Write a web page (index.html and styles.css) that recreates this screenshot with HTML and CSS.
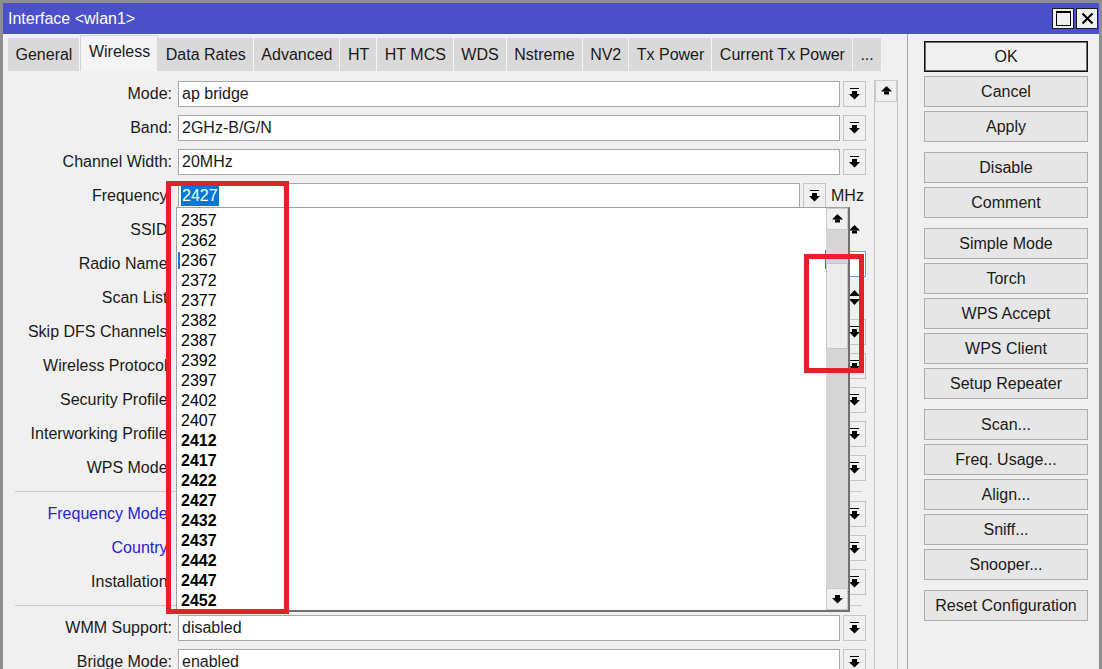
FILE: index.html
```html
<!DOCTYPE html>
<html lang="en">
<head>
<meta charset="UTF-8">
<title>Interface &lt;wlan1&gt;</title>
<link rel="stylesheet" href="styles.css">
</head>
<body>

<svg class="defs" xmlns="http://www.w3.org/2000/svg">
    <symbol id="ic-dd" viewBox="0 0 11 12">
        <rect x="1" y="0" width="9" height="1"/>
        <rect x="3" y="3" width="5" height="3"/>
        <polygon points="0,6 11,6 5.5,11.5"/>
    </symbol>
    <symbol id="ic-up" viewBox="0 0 11 12">
        <polygon points="0,6.5 11,6.5 5.5,1"/>
        <rect x="3" y="6.5" width="5" height="3"/>
    </symbol>
    <symbol id="ic-down" viewBox="0 0 11 12">
        <rect x="3" y="2" width="5" height="3"/>
        <polygon points="0,5 11,5 5.5,10.5"/>
    </symbol>
    <symbol id="ic-updown" viewBox="0 0 11 18">
        <polygon points="0,7 11,7 5.5,1"/>
        <polygon points="0,10 11,10 5.5,16"/>
    </symbol>
</svg>

<div class="window">
    <div class="titlebar">
        <span class="title">Interface &lt;wlan1&gt;</span>
        <div class="title-btns">
            <span class="tb-btn"><span class="max-box"></span></span>
            <span class="tb-btn">
                <svg width="13" height="13" viewBox="0 0 13 13"><path d="M1.5 1.5 L11.5 11.5 M11.5 1.5 L1.5 11.5" stroke="#000" stroke-width="2"/></svg>
            </span>
        </div>
    </div>

    <div class="body">
        <div class="main">
            <div class="tabs">
                <span class="tab">General</span>
                <span class="tab active">Wireless</span>
                <span class="tab">Data Rates</span>
                <span class="tab">Advanced</span>
                <span class="tab">HT</span>
                <span class="tab">HT MCS</span>
                <span class="tab">WDS</span>
                <span class="tab">Nstreme</span>
                <span class="tab">NV2</span>
                <span class="tab">Tx Power</span>
                <span class="tab">Current Tx Power</span>
                <span class="tab">...</span>
            </div>

            <div class="panel">
                <div class="form">
                    <div class="row">
                        <span class="lbl">Mode:</span>
                        <div class="field">ap bridge</div>
                        <span class="dd-btn"><svg class="ic"><use href="#ic-dd"/></svg></span>
                    </div>
                    <div class="row">
                        <span class="lbl">Band:</span>
                        <div class="field">2GHz-B/G/N</div>
                        <span class="dd-btn"><svg class="ic"><use href="#ic-dd"/></svg></span>
                    </div>
                    <div class="row">
                        <span class="lbl">Channel Width:</span>
                        <div class="field">20MHz</div>
                        <span class="dd-btn"><svg class="ic"><use href="#ic-dd"/></svg></span>
                    </div>
                    <div class="row">
                        <span class="lbl">Frequency:</span>
                        <div class="field"><span class="sel">2427</span></div>
                        <span class="dd-btn"><svg class="ic"><use href="#ic-dd"/></svg></span>
                        <span class="unit">MHz</span>
                    </div>
                    <div class="row">
                        <span class="lbl">SSID:</span>
                        <div class="field"></div>
                        <span class="ico-btn"><svg class="ic"><use href="#ic-up"/></svg></span>
                    </div>
                    <div class="row">
                        <span class="lbl">Radio Name:</span>
                        <div class="field full focus"></div>
                    </div>
                    <div class="row">
                        <span class="lbl">Scan List:</span>
                        <div class="field"></div>
                        <span class="ico-btn"><svg class="ic-tall"><use href="#ic-updown"/></svg></span>
                    </div>
                    <div class="row">
                        <span class="lbl">Skip DFS Channels:</span>
                        <div class="field"></div>
                        <span class="dd-btn"><svg class="ic"><use href="#ic-dd"/></svg></span>
                    </div>
                    <div class="row">
                        <span class="lbl">Wireless Protocol:</span>
                        <div class="field"></div>
                        <span class="dd-btn"><svg class="ic"><use href="#ic-dd"/></svg></span>
                    </div>
                    <div class="row">
                        <span class="lbl">Security Profile:</span>
                        <div class="field"></div>
                        <span class="dd-btn"><svg class="ic"><use href="#ic-dd"/></svg></span>
                    </div>
                    <div class="row">
                        <span class="lbl">Interworking Profile:</span>
                        <div class="field"></div>
                        <span class="dd-btn"><svg class="ic"><use href="#ic-dd"/></svg></span>
                    </div>
                    <div class="row">
                        <span class="lbl">WPS Mode:</span>
                        <div class="field"></div>
                        <span class="dd-btn"><svg class="ic"><use href="#ic-dd"/></svg></span>
                    </div>

                    <div class="sep"></div>

                    <div class="row">
                        <span class="lbl blue">Frequency Mode:</span>
                        <div class="field"></div>
                        <span class="dd-btn"><svg class="ic"><use href="#ic-dd"/></svg></span>
                    </div>
                    <div class="row">
                        <span class="lbl blue">Country:</span>
                        <div class="field"></div>
                        <span class="dd-btn"><svg class="ic"><use href="#ic-dd"/></svg></span>
                    </div>
                    <div class="row">
                        <span class="lbl">Installation:</span>
                        <div class="field"></div>
                        <span class="dd-btn"><svg class="ic"><use href="#ic-dd"/></svg></span>
                    </div>

                    <div class="sep"></div>

                    <div class="row">
                        <span class="lbl">WMM Support:</span>
                        <div class="field">disabled</div>
                        <span class="dd-btn"><svg class="ic"><use href="#ic-dd"/></svg></span>
                    </div>
                    <div class="row">
                        <span class="lbl">Bridge Mode:</span>
                        <div class="field">enabled</div>
                        <span class="dd-btn"><svg class="ic"><use href="#ic-dd"/></svg></span>
                    </div>
                </div>

                <div class="fscroll">
                    <span class="sb-btn"><svg class="ic"><use href="#ic-up"/></svg></span>
                </div>
            </div>
        </div>

        <div class="side">
            <span class="btn def">OK</span>
            <span class="btn">Cancel</span>
            <span class="btn">Apply</span>
            <span class="btn gap">Disable</span>
            <span class="btn">Comment</span>
            <span class="btn gap">Simple Mode</span>
            <span class="btn">Torch</span>
            <span class="btn">WPS Accept</span>
            <span class="btn">WPS Client</span>
            <span class="btn">Setup Repeater</span>
            <span class="btn gap">Scan...</span>
            <span class="btn">Freq. Usage...</span>
            <span class="btn">Align...</span>
            <span class="btn">Sniff...</span>
            <span class="btn">Snooper...</span>
            <span class="btn gap">Reset Configuration</span>
        </div>
    </div>

    <!-- open frequency list -->
    <div class="dropdown">
        <div class="dd-list">
            <div>2357</div>
            <div>2362</div>
            <div>2367</div>
            <div>2372</div>
            <div>2377</div>
            <div>2382</div>
            <div>2387</div>
            <div>2392</div>
            <div>2397</div>
            <div>2402</div>
            <div>2407</div>
            <div class="b">2412</div>
            <div class="b">2417</div>
            <div class="b">2422</div>
            <div class="b">2427</div>
            <div class="b">2432</div>
            <div class="b">2437</div>
            <div class="b">2442</div>
            <div class="b">2447</div>
            <div class="b">2452</div>
        </div>
        <div class="dd-scroll">
            <span class="sb-btn"><svg class="ic"><use href="#ic-up"/></svg></span>
            <span class="thumb"></span>
            <span class="sb-btn bottom"><svg class="ic"><use href="#ic-down"/></svg></span>
        </div>
    </div>

    <span class="caret caret-a"></span>
    <span class="caret caret-b"></span>

    <!-- red highlight boxes -->
    <div class="mark mark-list"></div>
    <div class="mark mark-scroll"></div>
</div>

</body>
</html>
```

FILE: styles.css
```css
* {
    box-sizing: border-box;
}
body {
    margin: 0;
    font-family: 'Liberation Sans', Arial, sans-serif;
    font-size: 16px;
    color: #1a1a1a;
    background: #f0f0f0;
    overflow: hidden;
}
.defs {
    position: absolute;
    width: 0;
    height: 0;
}
.window {
    position: relative;
    width: 1102px;
    height: 669px;
    border: 3px solid #8e8e8e;
    border-bottom: none;
    background: #f0f0f0;
    overflow: hidden;
}
.titlebar {
    height: 31px;
    background: #4b4fca;
    color: #fff;
    display: flex;
    align-items: center;
    justify-content: space-between;
    padding: 0 1px 0 5px;
}
.title-btns {
    display: flex;
    gap: 2px;
}
.tb-btn {
    width: 22px;
    height: 21px;
    background: #f0f0f0;
    border: 1px solid #1a1a1a;
    display: flex;
    align-items: center;
    justify-content: center;
}
.max-box {
    width: 15px;
    height: 15px;
    border: 1px solid #000;
    border-top-width: 2px;
}
.body {
    display: flex;
    height: 635px;
}
.main {
    width: 905px;
    border-right: 1px solid #a6a6a6;
}
.tabs {
    display: flex;
    align-items: flex-end;
    height: 37px;
    padding-left: 5px;
}
.tab {
    height: 33px;
    line-height: 33px;
    padding: 0 7px 0 7.5px;
    background: #d9d9d9;
    border-right: 1px solid #f4f4f4;
    white-space: nowrap;
}
.tab.active {
    height: 36px;
    line-height: 31px;
    background: #f4f4f4;
    border: 1px solid #d4d4d4;
    border-bottom: none;
}
.panel {
    display: flex;
    align-items: flex-start;
    padding-top: 10px;
    height: 100%;
}
.form {
    width: 863px;
    display: flex;
    flex-direction: column;
}
.row {
    display: flex;
    align-items: center;
    height: 26px;
    flex-shrink: 0;
    margin-bottom: 8px;
}
.lbl {
    width: 175px;
    padding-right: 6px;
    text-align: right;
    white-space: nowrap;
}
.lbl.blue {
    color: #2424d2;
}
.field {
    flex: 1;
    height: 26px;
    line-height: 24px;
    padding: 0 3px;
    margin-right: 3px;
    background: #fff;
    border: 1px solid #a8a8a8;
}
.field.full {
    margin-right: 0;
}
.field.focus {
    border-color: #6a9fd8;
}
.sel {
    display: inline-block;
    line-height: 20px;
    padding: 0 1px;
    margin-left: -1px;
    background: #0078d7;
    color: #fff;
}
.dd-btn,
.ico-btn {
    width: 23px;
    height: 26px;
    display: flex;
    align-items: center;
    justify-content: center;
}
.dd-btn {
    background: #f0f0f0;
    border: 1px solid #c4c4c4;
}
.unit {
    width: 40px;
    padding-left: 5px;
}
.ic {
    width: 11px;
    height: 12px;
}
.ic-tall {
    width: 11px;
    height: 18px;
}
.sep {
    height: 1px;
    flex-shrink: 0;
    background: #cbcbcb;
    margin: 2px 4px 9px 12px;
}
.fscroll {
    width: 24px;
    height: 600px;
    margin-left: 8px;
    margin-top: -1px;
    border-left: 1px solid #c8c8c8;
    border-right: 1px solid #c8c8c8;
}
.sb-btn {
    display: flex;
    align-items: center;
    justify-content: center;
    height: 22px;
    background: #f0f0f0;
    border: 1px solid #cacaca;
}
.side {
    flex: 1;
    display: flex;
    flex-direction: column;
    padding: 7px 0 0 16px;
}
.btn {
    display: block;
    width: 164px;
    height: 31px;
    line-height: 29px;
    margin-bottom: 4px;
    text-align: center;
    background: #e6e6e6;
    border: 1px solid #adadad;
    white-space: nowrap;
}
.btn.gap {
    margin-top: 6px;
}
.btn.def {
    background: #f0f0f0;
    border-color: #111;
    box-shadow: inset 0 0 0 1px #6c6c6c;
}
.dropdown {
    position: absolute;
    left: 173px;
    top: 204px;
    width: 674px;
    height: 405px;
    display: flex;
    background: #fff;
    border: 1px solid #a0a0a0;
    border-right: 2px solid #707070;
    border-bottom: 2px solid #707070;
}
.dd-list {
    flex: 1;
    padding: 3px 0 0 4px;
    line-height: 20px;
    color: #000;
}
.dd-list .b {
    font-weight: bold;
}
.dd-scroll {
    width: 22px;
    display: flex;
    flex-direction: column;
    background: #d6d6d6;
}
.dd-scroll .thumb {
    display: block;
    height: 86px;
    margin-top: 33px;
    background: #ececec;
    border: 1px solid #c6c6c6;
}
.dd-scroll .bottom {
    margin-top: auto;
}
.caret {
    position: absolute;
    background: #1d78d2;
}
.caret-a {
    left: 175px;
    top: 249px;
    width: 2px;
    height: 17px;
}
.caret-b {
    left: 822px;
    top: 247px;
    width: 1px;
    height: 19px;
}
.mark {
    position: absolute;
    border: 5px solid #e3212a;
}
.mark-list {
    left: 163px;
    top: 178px;
    width: 123px;
    height: 433px;
}
.mark-scroll {
    left: 801px;
    top: 251px;
    width: 60px;
    height: 119px;
}
```
